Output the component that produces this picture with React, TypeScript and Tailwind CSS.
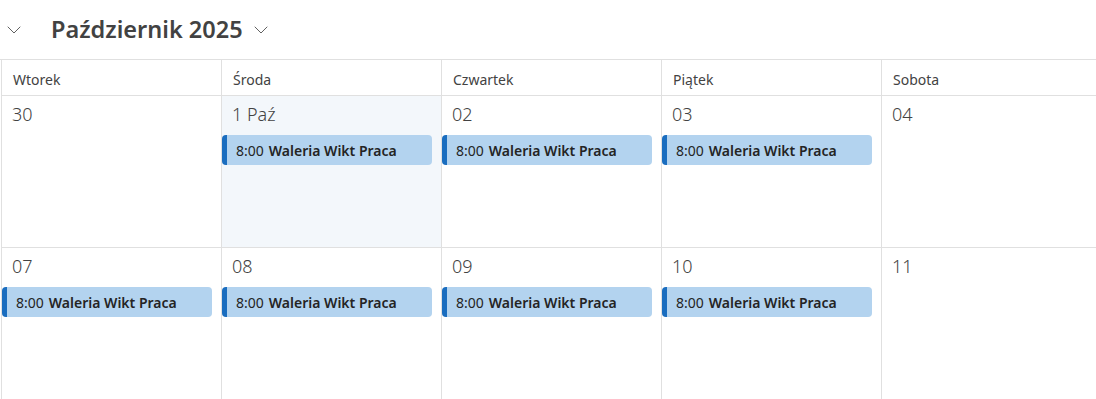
import { ChevronDown } from "lucide-react";

const days = ["Wtorek", "Środa", "Czwartek", "Piątek", "Sobota"];

const weeks = [
  [
    { label: "30", event: false },
    { label: "1 Paź", event: true, today: true },
    { label: "02", event: true },
    { label: "03", event: true },
    { label: "04", event: false },
  ],
  [
    { label: "07", event: true },
    { label: "08", event: true },
    { label: "09", event: true },
    { label: "10", event: true },
    { label: "11", event: false },
  ],
];

function EventChip() {
  return (
    <div className="mt-[9px] mr-[9px] h-[30px] flex items-center rounded-[4px] border-l-[5px] border-[#1a6dbf] bg-[#b3d3ef] pl-[9px] text-[14px] text-[#242424] whitespace-nowrap overflow-hidden">
      <span>8:00</span>
      <span className="ml-[5px] font-semibold">Waleria Wikt Praca</span>
    </div>
  );
}

export default function App() {
  return (
    <div
      className="w-[1096px] h-[399px] overflow-hidden bg-white text-[#424242]"
      style={{ fontFamily: '"Segoe UI", "Noto Sans", sans-serif' }}
    >
      {/* Month header */}
      <div className="h-[60px] flex items-center border-b border-[#e0e0e0]">
        <ChevronDown className="ml-[2px] text-[#616161]" size={24} strokeWidth={1} />
        <h1 className="ml-[25px] text-[23.5px] font-semibold text-[#424242] leading-none">
          Październik 2025
        </h1>
        <ChevronDown className="ml-[6px] text-[#616161]" size={24} strokeWidth={1} />
      </div>

      {/* Weekday row */}
      <div className="grid grid-cols-[repeat(5,220px)] ml-px">
        {days.map((d) => (
          <div
            key={d}
            className="h-[36px] border-l border-b border-[#e0e0e0] pl-[11px] pt-[3px] flex items-center text-[14px] text-[#424242]"
          >
            {d}
          </div>
        ))}
      </div>

      {weeks.map((week, wi) => (
        <div key={wi} className="grid grid-cols-[repeat(5,220px)] ml-px">
          {week.map((day) => (
            <div
              key={day.label}
              className={`h-[152px] border-l border-b border-[#e0e0e0] ${
                day.today ? "bg-[#f3f7fb]" : "bg-white"
              }`}
            >
              <div className="pl-[10px] pt-[6px] text-[18px] leading-[24px] font-light text-[#424242]">
                {day.label}
              </div>
              {day.event && <EventChip />}
            </div>
          ))}
        </div>
      ))}
    </div>
  );
}
